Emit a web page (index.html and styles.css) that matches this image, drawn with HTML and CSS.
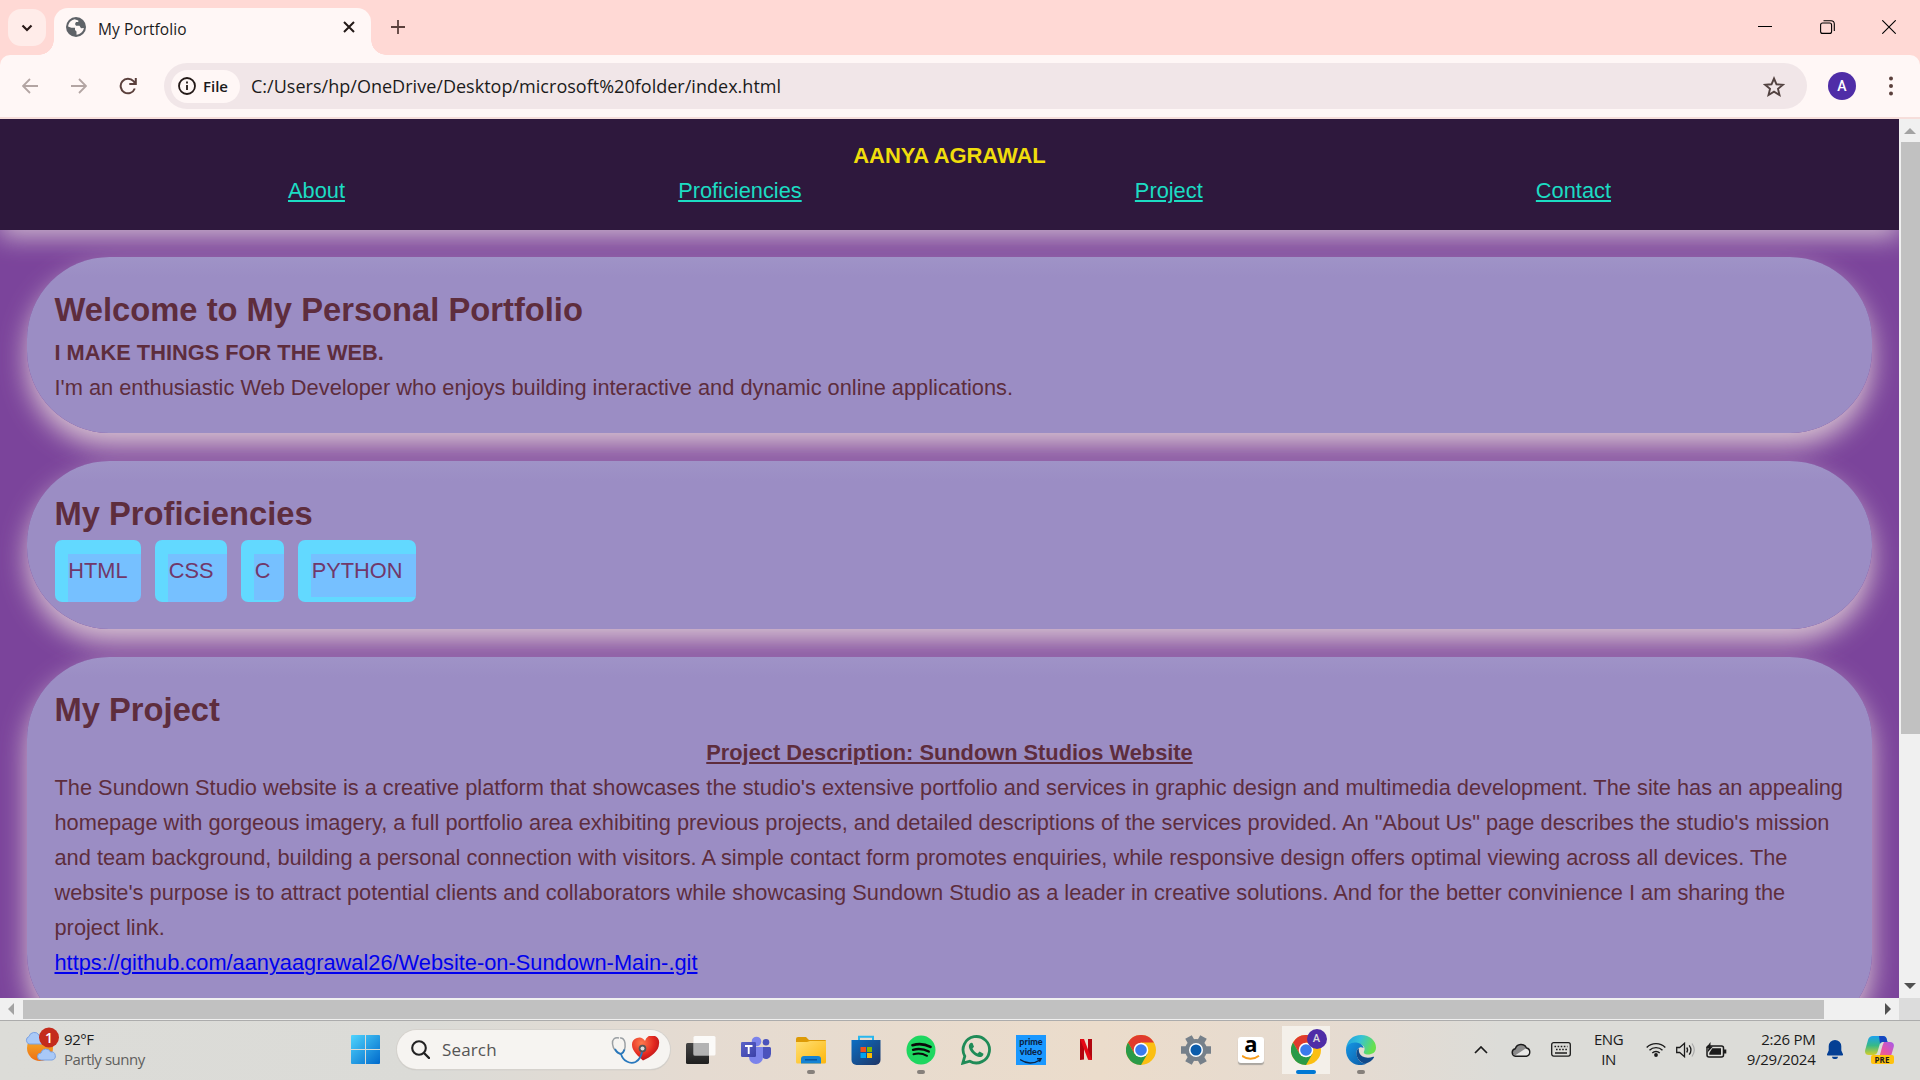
FILE: index.html
```html
<!DOCTYPE html>
<html lang="en">
<head>
<meta charset="utf-8">
<title>My Portfolio</title>
<link rel="stylesheet" href="styles.css">
</head>
<body>
<svg width="0" height="0" class="defs" aria-hidden="true">
  <defs>
    <linearGradient id="win" x1="0" y1="0" x2="1" y2="1"><stop offset="0" stop-color="#4fd4fd"/><stop offset="1" stop-color="#0069cb"/></linearGradient>
    <linearGradient id="folder" x1="0" y1="0" x2="1" y2="1"><stop offset="0" stop-color="#ffdf75"/><stop offset="1" stop-color="#fdb70c"/></linearGradient>
    <linearGradient id="store" x1="0" y1="0" x2="1" y2="1"><stop offset="0" stop-color="#0b6fc4"/><stop offset="1" stop-color="#1f3566"/></linearGradient>
    <linearGradient id="teams" x1="0" y1="0" x2="1" y2="1"><stop offset="0" stop-color="#5a62c8"/><stop offset="1" stop-color="#3b41a8"/></linearGradient>
    <linearGradient id="dark" x1="0" y1="0" x2="0" y2="1"><stop offset="0" stop-color="#444"/><stop offset="1" stop-color="#1f1f1f"/></linearGradient>
    <linearGradient id="sun" x1="0" y1="0" x2="0" y2="1"><stop offset="0" stop-color="#f6b62b"/><stop offset="1" stop-color="#ee6f14"/></linearGradient>
    <linearGradient id="edgeTop" x1="0" y1="0" x2="1" y2=".3"><stop offset="0" stop-color="#1d9be0"/><stop offset=".5" stop-color="#35c1d8"/><stop offset="1" stop-color="#66e04e"/></linearGradient>
    <linearGradient id="edgeLow" x1="0" y1="0" x2="1" y2="1"><stop offset="0" stop-color="#1597e5"/><stop offset="1" stop-color="#0c59a4"/></linearGradient>
    <linearGradient id="copA" x1="0" y1="0" x2="0" y2="1"><stop offset="0" stop-color="#1ba2ee"/><stop offset=".5" stop-color="#37b987"/><stop offset="1" stop-color="#d5cf2a"/></linearGradient>
    <linearGradient id="copB" x1="1" y1="0" x2="0" y2="1"><stop offset="0" stop-color="#a55bea"/><stop offset=".5" stop-color="#e653a8"/><stop offset="1" stop-color="#fb7d52"/></linearGradient>
    <radialGradient id="heart" cx=".35" cy=".3" r=".8"><stop offset="0" stop-color="#ff7a4d"/><stop offset=".6" stop-color="#e2271f"/><stop offset="1" stop-color="#a8101a"/></radialGradient>
    <symbol id="chrome" viewBox="0 0 30 30">
      <circle cx="15" cy="15" r="15" fill="#fbbf12"/>
      <path d="M2 7.500A15 15 0 0 1 28 7.500H15L8.500 18.800z" fill="#e03a2d"/>
      <path d="M2 7.500A15 15 0 0 0 15 30L21.500 18.800 8.500 18.800z" fill="#2a9a48"/>
      <circle cx="15" cy="15" r="7.300" fill="#fff"/><circle cx="15" cy="15" r="5.800" fill="#3a7bed"/>
    </symbol>
  </defs>
</svg>

<div class="tabstrip">
  <div class="tab-search"><svg width="12" height="8" viewBox="0 0 12 8"><path d="M1.500 1.500 6 6l4.500-4.500" fill="none" stroke="#2a1a18" stroke-width="2.200"/></svg></div>
  <div class="tab">
    <svg width="20" height="20" viewBox="0 0 20 20"><circle cx="10" cy="10" r="10" fill="#5f6368"/><path d="M8.500 2.200c-3.500.8-6 3.600-6.400 7.300l3.200 1.200 3.700.1v2.200l1.500 1.500v3.200c4-.3 6.800-3 7.400-6.600l-2.900.2-1.500-2.600H10l-1-1.600 1-2h2.300V3.500L8.500 2.200z" fill="#fff7f6"/><path d="M2.500 11.500c.6 3 3 5.500 5.500 6v-2.500L6 12.500z" fill="#5f6368"/></svg>
    <span class="tab-title">My Portfolio</span>
    <svg width="12" height="12" viewBox="0 0 12 12"><path d="M1 1l10 10M11 1L1 11" stroke="#231917" stroke-width="2"/></svg>
  </div>
  <svg class="newtab" width="14" height="14" viewBox="0 0 14 14"><path d="M7 0v14M0 7h14" stroke="#5b403c" stroke-width="1.800"/></svg>
  <div class="window-buttons">
    <svg width="14" height="14" viewBox="0 0 14 14"><path d="M0 6.500h14" stroke="#000"/></svg>
    <svg width="15" height="14" viewBox="0 0 15 14"><rect x=".6" y="3" width="11" height="10.400" rx="2" fill="none" stroke="#000" stroke-width="1.100"/><path d="M3.500.7H11a3.300 3.300 0 0 1 3.300 3.300v7" fill="none" stroke="#000" stroke-width="1.100"/></svg>
    <svg width="14" height="14" viewBox="0 0 14 14"><path d="M.3.3l13.400 13.400M13.700.3L.3 13.700" stroke="#000" stroke-width="1.100"/></svg>
  </div>
</div>

<div class="toolbar">
  <svg width="16" height="16" viewBox="0 0 16 16"><path d="M16 8H1.500M8 1L1 8l7 7" fill="none" stroke="#b3a5a3" stroke-width="1.800"/></svg>
  <svg class="fwd" width="16" height="16" viewBox="0 0 16 16"><path d="M0 8h14.500M8 1l7 7-7 7" fill="none" stroke="#b3a5a3" stroke-width="1.800"/></svg>
  <svg class="reload" width="18" height="18" viewBox="0 0 18 18"><path d="M15.800 11.500A7.300 7.300 0 1 1 14.500 4.200L16 6M16.800 1v6h-6.500" fill="none" stroke="#5b403c" stroke-width="2"/></svg>
  <div class="address">
    <div class="chip"><svg width="18" height="18" viewBox="0 0 18 18"><circle cx="9" cy="9" r="8" fill="none" stroke="#231917" stroke-width="1.800"/><path d="M9 8v5M9 4.500v2" stroke="#231917" stroke-width="1.800"/></svg><span>File</span></div>
    <span class="url">C:/Users/hp/OneDrive/Desktop/microsoft%20folder/index.html</span>
    <svg width="22" height="21" viewBox="0 0 22 21"><path d="M11 2.500l2.500 5.800 6.300.5-4.800 4.100 1.500 6.100L11 15.700l-5.500 3.300L7 12.900 2.200 8.800l6.300-.5z" fill="none" stroke="#534341" stroke-width="1.900"/></svg>
  </div>
  <div class="avatar">A</div>
  <svg class="menu" width="4" height="20" viewBox="0 0 4 20"><g fill="#5b403c"><circle cx="2" cy="2.500" r="2"/><circle cx="2" cy="10" r="2"/><circle cx="2" cy="17.500" r="2"/></g></svg>
</div>

<div class="viewport">
  <div class="page">
    <header class="site-header">
      <h1>AANYA AGRAWAL</h1>
      <nav><a>About</a><a>Proficiencies</a><a>Project</a><a>Contact</a></nav>
    </header>
    <main>
      <section class="card">
        <h2>Welcome to My Personal Portfolio</h2>
        <h3>I MAKE THINGS FOR THE WEB.</h3>
        <p>I'm an enthusiastic Web Developer who enjoys building interactive and dynamic online applications.</p>
      </section>
      <section class="card">
        <h2>My Proficiencies</h2>
        <ul class="skills"><li>HTML</li><li>CSS</li><li class="lift-small">C</li><li class="lift">PYTHON</li></ul>
      </section>
      <section class="card project">
        <h2>My Project</h2>
        <h3 class="centered">Project Description: Sundown Studios Website</h3>
        <p>The Sundown Studio website is a creative platform that showcases the studio's extensive portfolio and services in graphic design and multimedia development. The site has an appealing<br>homepage with gorgeous imagery, a full portfolio area exhibiting previous projects, and detailed descriptions of the services provided. An "About Us" page describes the studio's mission<br>and team background, building a personal connection with visitors. A simple contact form promotes enquiries, while responsive design offers optimal viewing across all devices. The<br>website's purpose is to attract potential clients and collaborators while showcasing Sundown Studio as a leader in creative solutions. And for the better convinience I am sharing the<br>project link.</p>
        <p><a class="link">https://github.com/aanyaagrawal26/Website-on-Sundown-Main-.git</a></p>
      </section>
    </main>
  </div>
  <div class="vscroll">
    <svg width="12" height="6" viewBox="0 0 12 6"><path d="M0 6L6 0l6 6z" fill="#a3a3a3"/></svg>
    <div class="vthumb"></div>
    <svg class="down" width="12" height="6" viewBox="0 0 12 6"><path d="M0 0l6 6 6-6z" fill="#505050"/></svg>
  </div>
</div>
<div class="hscroll">
  <svg width="6" height="12" viewBox="0 0 6 12"><path d="M6 0L0 6l6 6z" fill="#a3a3a3"/></svg>
  <div class="hthumb"></div>
  <svg class="right" width="6" height="12" viewBox="0 0 6 12"><path d="M0 0l6 6-6 6z" fill="#505050"/></svg>
  <div class="corner"></div>
</div>

<footer class="taskbar">
  <div class="weather">
    <svg width="36" height="36" viewBox="0 0 36 36"><circle cx="15" cy="21" r="13" fill="url(#sun)"/><path d="M4 17a4 4 0 0 1 0-7.500 5.500 5.500 0 0 1 10-1.500l3 9z" fill="#a9c9f7" stroke="#7ba2e2"/><path d="M16 33a3.500 3.500 0 0 1 0-7 5 5 0 0 1 9.500-1A4 4 0 0 1 27 33z" fill="#a9c9f7" stroke="#7ba2e2"/><circle cx="24" cy="10.500" r="10" fill="#c42b1c"/><text x="24" y="15.500" text-anchor="middle" class="badge-text">1</text></svg>
    <div class="two"><span>92°F</span><span class="muted">Partly sunny</span></div>
  </div>
  <svg class="start" width="29" height="29" viewBox="0 0 29 29"><path d="M1 0h13v14H0V1a1 1 0 0 1 1-1zM15 0h13a1 1 0 0 1 1 1v13H15zM0 15h14v14H1a1 1 0 0 1-1-1zM15 15h14v13a1 1 0 0 1-1 1H15z" fill="url(#win)"/></svg>
  <div class="search">
    <svg width="19" height="19" viewBox="0 0 19 19"><circle cx="8" cy="8" r="6.800" fill="none" stroke="#222" stroke-width="2.100"/><path d="M13 13l5 5" stroke="#222" stroke-width="2.400" stroke-linecap="round"/></svg>
    <span>Search</span>
    <svg width="49" height="28" viewBox="0 0 49 28"><path d="M32 24.500C27 20 21 15 21 9a7 7 0 0 1 13-4 7 7 0 0 1 14 3c0 7-8 13-16 16.500z" fill="url(#heart)"/><path d="M8 2C4 1 1 3 1.500 8c.5 4 3 8 8 10 4-2 5-7 4.500-11C13.500 3 11 1.500 9 2" fill="none" stroke="#9a9fa3" stroke-width="1.500"/><path d="M4 13c1.500 3 3.500 4.500 6 5 2-1 3-2.500 3.500-4.500M10 18c2 7 9 10.500 14.500 8 4-2 6-6 7-12" fill="none" stroke="#2878bd" stroke-width="1.800"/><circle cx="31.500" cy="12.500" r="3.800" fill="#555"/><circle cx="31.500" cy="12.500" r="2" fill="#ddd"/></svg>
  </div>
  <div class="apps">
    <div class="app"><svg width="30" height="30" viewBox="0 0 30 30"><rect y="8" width="23" height="21" rx="1.500" fill="url(#dark)"/><rect x="7.500" y="1" width="22" height="19.500" rx="1.500" fill="#fff" fill-opacity=".85"/><path d="M7.500 8H23v12.500H7.500z" fill="#999" fill-opacity=".65"/></svg></div>
    <div class="app"><svg width="30" height="30" viewBox="0 0 30 30"><circle cx="25" cy="7.200" r="3.300" fill="#4b53bc"/><path d="M20 12h8.500c.8 0 1.500.7 1.500 1.500V19a5 5 0 0 1-8 4z" fill="#4b53bc"/><circle cx="15.500" cy="6.500" r="4.800" fill="#7b83eb"/><path d="M9 12h13v10a7 7 0 0 1-14 0z" fill="#7b83eb"/><rect y="7" width="15" height="15" rx="1.200" fill="url(#teams)"/><path d="M4 11h7.500M7.700 11v8" stroke="#fff" stroke-width="1.900"/></svg></div>
    <div class="app run"><svg width="30" height="30" viewBox="0 0 30 30"><path d="M0 4a2 2 0 0 1 2-2h8l3 3h16a1 1 0 0 1 1 1v5H0z" fill="#dd9a06"/><path d="M0 7h11l3-1h16v21a1.500 1.500 0 0 1-1.500 1.500h-27A1.500 1.500 0 0 1 0 27z" fill="url(#folder)"/><path d="M5 28.500V24a3 3 0 0 1 3-3h14a3 3 0 0 1 3 3v4.500z" fill="#1583d3"/><path d="M9 24.800h12" stroke="#075097" stroke-width="1.300"/></svg></div>
    <div class="app"><svg width="30" height="30" viewBox="0 0 30 30"><path d="M8 6V1.800h14V6" fill="none" stroke="#29b7ee" stroke-width="2"/><path d="M.5 5h29v20a5 5 0 0 1-5 5h-19a5 5 0 0 1-5-5z" fill="url(#store)"/><path d="M9.500 12H15v5H9.500z" fill="#f2511b"/><path d="M16 12h5v5h-5z" fill="#7fba00"/><path d="M9.500 18H15v5H9.500z" fill="#00a4ef"/><path d="M16 18h5v5h-5z" fill="#ffb900"/></svg></div>
    <div class="app run"><svg width="30" height="30" viewBox="0 0 30 30"><circle cx="15" cy="15" r="14.500" fill="#1ed760"/><g fill="none" stroke="#0a0a0a" stroke-linecap="round"><path d="M6.500 10.200c6-1.700 12.500-1.200 18 1.700" stroke-width="2.700"/><path d="M7 14.800c5.500-1.500 11-.8 15.800 1.800" stroke-width="2.300"/><path d="M7.500 19.200c4.500-1.200 9.300-.7 13.500 1.600" stroke-width="2"/></g></svg></div>
    <div class="app"><svg width="30" height="30" viewBox="0 0 30 30"><path d="M1.800 28.200l2-7a13.200 13.200 0 1 1 5 5z" fill="none" stroke="#1f8b57" stroke-width="2.800"/><path d="M10.200 7.800c-2 .7-2.700 2.800-2.200 4.700 1.200 4.500 5.500 8.600 10 9.500 2.200.4 4.300-.9 4.500-3.300l-4-2.200-1.800 2c-2.300-.9-4.300-2.700-5.200-5l1.500-1.800-1.500-3.800z" fill="#1f8b57"/></svg></div>
    <div class="app"><div class="prime"><span>prime</span><span>video</span><svg width="22" height="6" viewBox="0 0 22 6"><path d="M0 1.500c6 4.500 14 4.500 20 .5M17 .8h4l-1.500 3" fill="none" stroke="#0b2344" stroke-width="1.400"/></svg></div></div>
    <div class="app"><svg width="12" height="21" viewBox="0 0 12 21"><path d="M0 0h4v20.500L0 21zM8 0h4v21l-4-.5z" fill="#b1060f"/><path d="M0 0h4l8 21-4-.5z" fill="#e50914"/></svg></div>
    <div class="app"><svg width="30" height="30"><use href="#chrome"/></svg></div>
    <div class="app"><svg width="30" height="30" viewBox="0 0 30 30"><circle cx="15" cy="15" r="11" fill="#76808a"/><g stroke="#76808a" stroke-width="7.500"><path d="M0 15h30M7.500 2l15 26M22.500 2l-15 26"/></g><circle cx="15" cy="15" r="7" fill="#fff"/><circle cx="15" cy="15" r="5.500" fill="#0b5cab"/></svg></div>
    <div class="app"><div class="amazon"><span>a</span><svg width="18" height="5" viewBox="0 0 18 5"><path d="M0 .8c5 4 12 4 17 0" fill="none" stroke="#f79c1a" stroke-width="1.900"/></svg></div></div>
    <div class="app active"><svg width="30" height="30"><use href="#chrome"/></svg><span class="profile">A</span></div>
    <div class="app run"><svg width="30" height="30" viewBox="0 0 30 30"><path d="M0 14C1 5 7 0 15 0c9 0 15 6 15 12.500 0 5-4 7-8 7-3.500 0-4.800-1.500-4-3 2-4-1-7.500-6-7.500C6 9 1 11 0 14z" fill="url(#edgeTop)"/><path d="M0 15c0-5 5-8 10-7.500 4.500.3 7.500 3 7.500 5.500-3-2-7 0-7 5C10.500 24 15 29 21 28.500 10 33.500 0 26 0 15z" fill="url(#edgeLow)"/><path d="M12.500 13c-4 4-2.500 13 6.500 15.700 4-.7 7-3.200 9-6.200.3-.8-.3-1-1-.7-6 2.400-13 .2-14-5-.2-1.600 0-2.700-.5-3.800z" fill="#114a8b"/></svg></div>
  </div>
  <div class="tray">
    <svg width="14" height="8" viewBox="0 0 14 8"><path d="M1 7l6-6 6 6" fill="none" stroke="#1b1b1b" stroke-width="1.700"/></svg>
    <svg class="cloud" width="20" height="14" viewBox="0 0 20 14"><path d="M4.500 13.200a3.800 3.800 0 0 1-.2-7.500A6 6 0 0 1 15.500 5a4.200 4.200 0 0 1 0 8.200z" fill="#e8e8e6"/><path d="M1 10c0-3 1.500-4 3.300-4.300A6 6 0 0 1 15.500 5L4 12.500z" fill="#8b8b8b"/><path d="M4.500 13.200a3.800 3.800 0 0 1-.2-7.500A6 6 0 0 1 15.500 5a4.200 4.200 0 0 1 0 8.200z" fill="none" stroke="#1b1b1b" stroke-width="1.400"/></svg>
    <svg class="keyb" width="20" height="15" viewBox="0 0 20 15"><rect x=".7" y=".7" width="18.600" height="13.400" rx="2" fill="none" stroke="#1b1b1b" stroke-width="1.300"/><path d="M3.500 4.500h13M5 7.500h11" stroke="#1b1b1b" stroke-width="1.600" stroke-dasharray="1.600 1.500"/><path d="M4 11h12" stroke="#1b1b1b" stroke-width="1.500"/></svg>
    <div class="two lang"><span>ENG</span><span>IN</span></div>
    <svg class="wifi" width="20" height="15" viewBox="0 0 20 15"><g fill="none" stroke="#1b1b1b" stroke-width="1.400"><path d="M.7 5.500a13 13 0 0 1 18.600 0M3.500 8.300a9.200 9.200 0 0 1 13 0M6.300 11a5.300 5.300 0 0 1 7.400 0"/></g><circle cx="10" cy="13" r="1.900" fill="#1b1b1b"/></svg>
    <svg class="vol" width="20" height="16" viewBox="0 0 20 16"><path d="M.7 5.500h3L8.500 1.300v13.400L3.700 10.500h-3z" fill="none" stroke="#1b1b1b" stroke-width="1.300"/><path d="M10.700 5.500q1.800 2.500 0 5M13.200 3.300q3.500 4.700 0 9.400" fill="none" stroke="#1b1b1b" stroke-width="1.300"/><path d="M16 1.500q4.500 6.500 0 13" fill="none" stroke="#aaa" stroke-width="1.200"/></svg>
    <svg class="batt" width="21" height="16" viewBox="0 0 21 16"><rect x="1" y="4" width="16.500" height="11" rx="2" fill="none" stroke="#1b1b1b" stroke-width="1.500"/><path d="M3.300 11l3-4.700H15v6.500H3.300zM18 7.500h2.300v4H18z" fill="#1b1b1b"/><path d="M4.500 0L0 6h2.500L1.500 10.500 7 4.500H4.500z" fill="#1b1b1b"/></svg>
    <div class="two clock"><span>2:26 PM</span><span>9/29/2024</span></div>
    <svg class="bell" width="16" height="19" viewBox="0 0 16 19"><path d="M8 0a6.300 6.300 0 0 1 6.300 6.300v4.200L16 14.300a.8.8 0 0 1-.7 1.200H.7a.8.8 0 0 1-.7-1.200l1.700-3.800V6.300A6.300 6.300 0 0 1 8 0zM5 16.700h6a3 2.400 0 0 1-6 0z" fill="#043f94"/></svg>
    <div class="copilot"><svg width="29" height="24" viewBox="0 0 29 24"><path d="M8 0h10c2 0 3 1 3.500 2.500L22.500 6H18c-2 0-3 1-3.500 3l-2 7c-.7 2-2 3-4 3H4c-3 0-4.500-2-3.800-5L3 4C3.700 1.500 5.500 0 8 0z" fill="url(#copA)"/><path d="M14 0h4c2 0 3 1 3.500 2.500L22.500 6H18c-1.500 0-2.500.6-3 2z" fill="#1546c0"/><path d="M19 6h6c3 0 4.500 2 3.700 5L26 20c-.5 2-2 4-4.500 4H11c2-.3 3-1.500 3.500-3.500l3-11z" fill="url(#copB)"/></svg><span>PRE</span></div>
  </div>
</footer>
</body>
</html>
```
FILE: styles.css
```css
* { box-sizing: border-box; margin: 0; padding: 0; }
html, body { width: 1920px; height: 1080px; overflow: hidden; }
body { display: flex; flex-direction: column; background: #ffd9d5; font-family: "Open Sans", "Noto Sans", sans-serif; color: #1b1b1b; }
svg { display: block; flex: none; }
.defs { position: absolute; }

/* Browser tab strip */
.tabstrip { height: 55px; display: flex; align-items: flex-start; padding-left: 8px; background: #ffd9d5; flex: none; }
.tab-search { width: 38px; height: 37px; margin-top: 9px; border-radius: 13px; background: #ffece9; display: flex; align-items: center; justify-content: center; }
.tab { position: relative; width: 317px; height: 47px; margin: 8px 0 0 8px; padding: 0 16px 9px 12px; border-radius: 14px 14px 0 0; background: #fff7f6; display: flex; align-items: center; }
.tab::before, .tab::after { content: ""; position: absolute; bottom: 0; width: 15px; height: 15px; }
.tab::before { left: -15px; background: radial-gradient(circle at 0 0, transparent 14.5px, #fff7f6 15px); }
.tab::after { right: -15px; background: radial-gradient(circle at 100% 0, transparent 14.5px, #fff7f6 15px); }
.tab-title { flex: 1; margin-left: 12px; font-size: 15.5px; letter-spacing: .05px; line-height: 20px; padding-top: 3px; }
.newtab { margin: 20px 0 0 20px; }
.window-buttons { margin: 20px 24px 0 auto; display: flex; gap: 47.500px; }

/* Toolbar */
.toolbar { height: 64px; flex: none; display: flex; align-items: center; padding: 0 27px 0 22px; background: #fff7f6; border-bottom: 2px solid #f6dedb; border-radius: 10px 10px 0 0; }
.fwd { margin-left: 33px; }
.reload { margin-left: 32px; }
.address { width: 1643px; height: 46px; margin-left: 27px; padding: 0 22px 0 7px; border-radius: 23px; background: #f1e6e8; display: flex; align-items: center; }
.chip { width: 69px; height: 33px; border-radius: 17px; background: #fff7f6; display: flex; align-items: center; gap: 7px; padding-left: 7px; font-size: 15px; font-weight: 600; letter-spacing: 0; }
.url { flex: 1; margin-left: 11px; font-size: 18px; letter-spacing: .02px; }
.avatar { width: 28px; height: 28px; margin-left: 21px; border-radius: 50%; background: #4f2da7; color: #fff; font: 500 14px/29px Roboto, sans-serif; text-align: center; }
.menu { margin-left: auto; }

/* Page area */
.viewport { height: 879px; flex: none; display: flex; overflow: hidden; }
.page { width: 1899px; height: 879px; overflow: hidden; background: #7b449b; color: #5e2d3d; font: 21.800px/35px "Liberation Sans", Arial, sans-serif; }
.site-header { position: relative; height: 111px; padding: 19px 288px; background: #2e183d; box-shadow: 0 7px 24px rgba(222, 206, 216, .82); text-align: center; }
.site-header h1 { font-size: 22px; line-height: 35px; color: #f0dd0c; letter-spacing: -.05px; }
.site-header nav { display: flex; justify-content: space-between; color: #1cdcc3; }
.site-header a { text-decoration: underline; }
main { padding: 27px 27px 0; display: flex; flex-direction: column; gap: 28px; }
.card { position: relative; padding: 27px 27.500px; height: 176px; border-radius: 82.500px; background: linear-gradient(#9f93c7, #9b8dc4 20px); box-shadow: 0 13px 27px #d6c0d0; white-space: nowrap; }
.card:nth-child(2) { height: 168px; }
.card.project { height: 379px; }
.card h2 { font-size: 32.730px; line-height: 52px; height: 51px; }
.card h3 { font-size: 21.800px; line-height: 35px; }
.centered { text-align: center; text-decoration: underline; }
.link { color: #0000ee; text-decoration: underline; }
.skills { list-style: none; display: flex; gap: 13.800px; padding-top: 1px; }
.skills li { height: 62px; padding: 13px 13.700px; border-radius: 7px; color: #71386a; background: linear-gradient(#76c0ff, #76c0ff) 13px 14px / 100% 100% no-repeat #62d9ff; }
.skills .lift { background-size: 100% 43px; }
.skills .lift-small { background-size: 100% 46px; }

/* Scrollbars */
.vscroll { width: 21px; background: #f0f0f0; display: flex; flex-direction: column; align-items: center; padding-top: 9px; }
.vthumb { align-self: flex-end; width: 19px; height: 592px; margin-top: 8px; background: #c1c1c1; }
.down { margin: auto 0 9px; }
.hscroll { height: 22px; flex: none; display: flex; align-items: center; padding-left: 8px; background: #f0f0f0; }
.hthumb { width: 1801px; height: 19px; margin-left: 9px; background: #c1c1c1; }
.right { margin: 0 8px 0 auto; }
.corner { width: 21px; height: 22px; background: #dcdcdc; }

/* Taskbar */
.taskbar { height: 60px; flex: none; display: flex; align-items: center; padding-bottom: 2px; border-top: 1px solid #acacac; background: linear-gradient(90deg, #dcdcd8 0, #dbdbd7 430px, #e5dbd1 700px, #ebdccb 1100px, #e5dbd1 1350px, #dcdcd8 1500px); font-size: 15px; }
.weather { width: 351px; display: flex; padding-left: 25px; gap: 3px; align-items: center; }
.weather > svg { margin-top: -9px; }
.badge-text { font: 600 14px "Open Sans", sans-serif; fill: #fff; }
.two { display: flex; flex-direction: column; line-height: 20px; letter-spacing: -.45px; margin-top: -1px; }
.muted { color: #5f5f5d; letter-spacing: -.45px; }
.search { width: 273px; height: 39px; margin-left: 17px; padding: 0 10px 0 14px; border-radius: 20px; background: #f6f4f1; box-shadow: 0 0 0 1px #d5d2cd, 0 1px 1px #aaa; display: flex; align-items: center; font-size: 17px; color: #555; }
.search span { margin: 0 auto 0 12px; letter-spacing: .15px; }
.apps { display: flex; margin-left: 3.500px; }
.app { position: relative; width: 55px; height: 57px; display: flex; align-items: center; justify-content: center; }
.run::after { content: ""; position: absolute; bottom: 4px; left: 23px; width: 8px; height: 4px; border-radius: 2px; background: #86807b; }
.prime { width: 30px; height: 30px; background: #1a98ff; color: #0b2344; font: 900 9px/10px Lato, sans-serif; display: flex; flex-direction: column; align-items: center; padding-top: 2px; }
.prime svg { margin-top: 1px; }
.amazon { width: 26px; height: 26px; border-radius: 3px; background: #fff; box-shadow: 0 2px 1px #aaa6a0; color: #000; font: bold 22px/18px "Open Sans", sans-serif; display: flex; flex-direction: column; align-items: center; }
.amazon span { height: 18px; line-height: 13px; }
.active { background: linear-gradient(#f4f0ea, #f4f0ea) center / 48px 48px no-repeat; }
.active::after { content: ""; position: absolute; bottom: 4px; left: 17px; width: 20px; height: 4px; border-radius: 2px; background: #0078d4; }
.profile { position: absolute; left: 28px; top: 8px; width: 20px; height: 20px; border-radius: 50%; background: #4f2da7; color: #ddd; font: 500 11px/20px Roboto, sans-serif; text-align: center; }
.tray { flex: 1; display: flex; align-items: center; padding-left: 85px; }
.cloud { margin-left: 23px; }
.keyb { margin-left: 20px; }
.lang { width: 30px; margin-left: 23px; align-items: center; }
.wifi { margin-left: 22px; }
.vol { margin-left: 10px; }
.batt { margin-left: 10px; }
.clock { width: 80px; margin-left: 9px; align-items: flex-end; letter-spacing: -.25px; }
.bell { margin-left: 11px; }
.copilot { position: relative; margin-left: 22px; width: 29px; height: 28px; }
.copilot span { position: absolute; left: 6px; bottom: 0; width: 23px; height: 9px; border-radius: 2px; background: #ffc20e; color: #1b1b1b; font: bold 8px/9px "Open Sans", sans-serif; text-align: center; }
```
